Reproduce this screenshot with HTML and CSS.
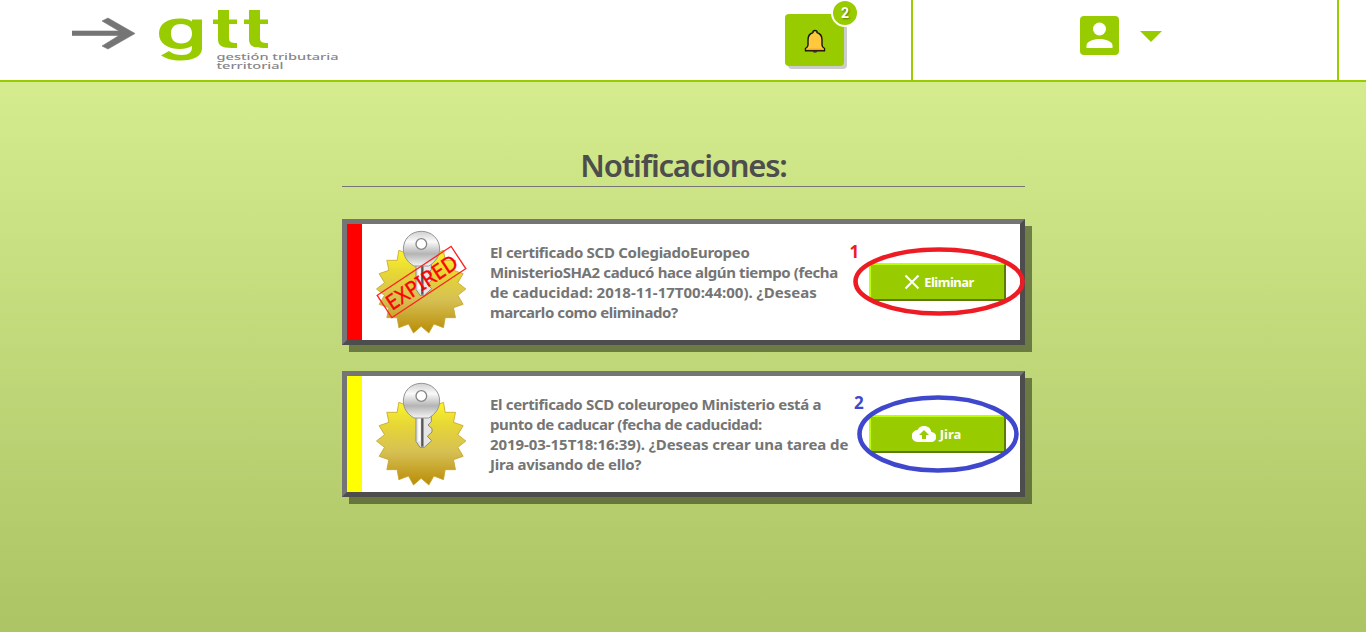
FILE: index.html
```html
<!DOCTYPE html>
<html lang="es">
<head>
<meta charset="utf-8">
<title>Notificaciones</title>
<link rel="stylesheet" href="styles.css">
</head>
<body>
<header class="topbar">
  <div class="brand">
    <svg class="logo" width="280" height="76" viewBox="0 0 280 76" role="img" aria-label="gtt">
      <path class="arrow" d="M0 31h47L30 21l6-3 27 15.500-27 15.500-6-3 17-10.500H0z"/>
      <g class="mark">
        <path fill-rule="evenodd" d="M130 19.500v29c0 8-9 12-21 12-9 0-15-2-20-5l8-4.500c4 3 8 4 13 4 7 0 10-3 10-7.500v-1.500c-4 2-7 3-12 3-13 0-21-6-21-15.500S95 18.500 108 18.500c6 0 9 1 12 3v-2zM109 24c-6 0-10 3-10 9.500s4 10 10 10c7 0 11-4 11-10s-4-9.500-11-9.500z"/>
        <path d="M146 10h11v9.500h8v4.500h-8v14c0 4 2 5 8 5v5h-5c-11 0-14-3-14-9V24h-5v-4.500h5z"/>
        <path d="M177 10h11v9.500h8v4.500h-8v14c0 4 2 5 8 5v5h-5c-11 0-14-3-14-9V24h-5v-4.500h5z"/>
      </g>
      <g class="tagline">
        <text x="144.500" y="60" textLength="122" lengthAdjust="spacingAndGlyphs">gestión tributaria</text>
        <text x="144.500" y="69.300" textLength="67" lengthAdjust="spacingAndGlyphs">territorial</text>
      </g>
    </svg>
    <div class="bell">
      <svg width="22" height="25" viewBox="0 0 22 25">
        <path d="M8.500 22h5q-.5 2-2.500 2t-2.500-2z" fill="#6b4a38"/>
        <path d="M9 3.500V2.300Q11 .6 13 2.300v1.200Q18 5 18 11v5q0 2 2.500 3.500v2.300h-19v-2.300Q4 18 4 16v-5Q4 5 9 3.500z" fill="#ffc83d" stroke="#15150a" stroke-width="1.400"/>
        <path d="M2.400 19.600h17.200v1.500H2.400z" fill="#f5a32c"/>
      </svg>
      <span class="badge">2</span>
    </div>
  </div>
  <div class="account">
    <svg width="39" height="39" viewBox="0 0 39 39">
      <rect width="39" height="39" rx="4" fill="#9c0"/>
      <circle cx="19.500" cy="13" r="6.500" fill="#fff"/>
      <path d="M6.500 32v-2.500c0-4 7-6.500 13-6.500s13 2.500 13 6.500V32z" fill="#fff"/>
    </svg>
    <span class="caret"></span>
  </div>
</header>

<main class="content">
  <h1 class="title"><span class="title-text">Notificaciones:</span></h1>

  <article class="card expired">
    <svg class="seal" width="93" height="105" viewBox="120 60 279 315">
      <defs>
        <linearGradient id="gold" x1="0" y1="0" x2="0" y2="1">
          <stop offset="0" stop-color="#fbf42c"/><stop offset=".28" stop-color="#e6d636"/><stop offset=".6" stop-color="#d6c053"/><stop offset="1" stop-color="#b98c08"/>
        </linearGradient>
        <linearGradient id="steel" x1="0" y1="0" x2="0" y2="1">
          <stop offset="0" stop-color="#d0d0d0"/><stop offset=".3" stop-color="#fafafa"/><stop offset=".65" stop-color="#b4b4b4"/><stop offset="1" stop-color="#f4f4f4"/>
        </linearGradient>
        <g id="certificate">
          <path transform="translate(258.500 237)" fill="url(#gold)" stroke="#c5a52c" stroke-width="2.500" stroke-linejoin="round" d="M134 0 110 19 126 46 97 56 103 86 72 86 67 116 38 105 23 132 0 112-23 132-38 105-67 116-72 86-103 86-97 56-126 46-110 19-134 0-110-19-126-46-97-56-103-86-72-86-67-116-38-105-23-112 0-112 23-112 38-105 67-116 72-86 103-86 97-56 126-46 110-19z"/>
          <path d="M243 160v78l12 18h13l22-20-13-13 14-13v-10l-12-11 10-10v-19z" fill="#e6e6e6" stroke="#8b8b86" stroke-width="3"/>
          <path d="M262 168v86" stroke="#555" stroke-width="7"/>
          <path d="M253 168v70" stroke="#fff" stroke-width="6"/>
          <path fill="url(#steel)" stroke="#969696" stroke-width="3" d="M259 64c31 0 55 23 55 53 0 23-14 40-33 51h-44c-19-11-32-28-32-51 0-30 23-53 54-53z"/>
          <circle cx="259" cy="102" r="16" fill="#fff" stroke="#858585" stroke-width="4"/>
        </g>
      </defs>
      <use href="#certificate"/>
      <g transform="translate(259.500 216) rotate(-33.500)">
        <rect x="-133" y="-40" width="266" height="80" fill="none" stroke="#f22" stroke-width="4"/>
        <text class="stamp" x="-122" y="24" textLength="244" lengthAdjust="spacingAndGlyphs">EXPIRED</text>
      </g>
    </svg>
    <p class="message">
      <span class="line l1">El certificado SCD ColegiadoEuropeo</span>
      <span class="line l2">MinisterioSHA2 caducó hace algún tiempo (fecha</span>
      <span class="line l3">de caducidad: 2018-11-17T00:44:00). ¿Deseas</span>
      <span class="line l4">marcarlo como eliminado?</span>
    </p>
    <button class="action">
      <svg width="16" height="16" viewBox="0 0 16 16"><path d="M1.500 1.500l13 13m0-13l-13 13" stroke="#fff" stroke-width="2.100"/></svg>
      <span>Eliminar</span>
    </button>
    <svg class="note" width="190" height="90" viewBox="845 235 190 90">
      <ellipse cx="939" cy="281.500" rx="83.500" ry="32" fill="none" stroke="#ed1c24" stroke-width="4.600"/>
      <text x="849.500" y="258" fill="#ed1c24">1</text>
    </svg>
  </article>

  <article class="card warning">
    <svg class="seal" width="93" height="105" viewBox="120 60 279 315"><use href="#certificate"/></svg>
    <p class="message">
      <span class="line l5">El certificado SCD coleuropeo Ministerio está a</span>
      <span class="line l6">punto de caducar (fecha de caducidad:</span>
      <span class="line l7">2019-03-15T18:16:39). ¿Deseas crear una tarea de</span>
      <span class="line l8">Jira avisando de ello?</span>
    </p>
    <button class="action jira">
      <svg width="24" height="16" viewBox="0 0 24 16"><path fill="#fff" fill-rule="evenodd" d="M19.400 6A7.500 7.500 0 0 0 5.400 4 6 6 0 0 0 6 16h13a5 5 0 0 0 .4-10zM14 9v4h-4V9H7l5-5 5 5z"/></svg>
      <span>Jira</span>
    </button>
    <svg class="note" width="190" height="90" viewBox="845 387 190 90">
      <ellipse cx="938" cy="434" rx="78.500" ry="36.500" fill="none" stroke="#3f48cc" stroke-width="4.600"/>
      <text x="854" y="409" fill="#3f48cc">2</text>
    </svg>
  </article>
</main>
</body>
</html>
```
FILE: styles.css
```css
* { box-sizing: border-box; }

body {
  margin: 0;
  height: 632px;
  display: flex;
  flex-direction: column;
  overflow: hidden;
  font-family: "Noto Sans", sans-serif;
}

.topbar {
  display: flex;
  height: 82px;
  flex: none;
  background: #fff;
  border-bottom: 2px solid #9c0;
}

.brand {
  display: flex;
  justify-content: space-between;
  width: 913px;
  padding: 0 67px 0 72px;
  border-right: 2px solid #9c0;
}

.arrow { fill: #757575; stroke: #757575; stroke-width: 0.6; }
.mark { fill: #9c0; }
.tagline { fill: #858589; font: 500 9.5px "Noto Sans", sans-serif; }

.bell {
  position: relative;
  display: flex;
  align-items: center;
  justify-content: center;
  width: 59px;
  height: 52px;
  margin-top: 14px;
  padding-top: 3px;
  background: #9c0;
  border-radius: 4px;
  box-shadow: 3px 3px 0 #ccc;
}

.badge {
  position: absolute;
  top: -15px;
  right: -15px;
  width: 28px;
  height: 28px;
  border: 2px solid #fff;
  border-radius: 50%;
  background: #9c0;
  color: #fff;
  font: 700 14px/24px Roboto, sans-serif;
  text-align: center;
  text-shadow: 1px 1px 2px #5a7a00;
}

.account {
  display: flex;
  align-items: flex-start;
  gap: 21px;
  width: 426px;
  padding: 16px 0 0 167px;
  border-right: 2px solid #9c0;
}

.caret {
  margin-top: 15px;
  border: 11px solid transparent;
  border-top-color: #9c0;
  border-bottom: 0;
}

.content {
  flex: 1;
  display: flex;
  flex-direction: column;
  gap: 26px;
  padding: 63px 341px 0 342px;
  background: linear-gradient(#d4ec8d, #acc464);
}

.title {
  height: 42px;
  margin: 0 0 6px;
  border-bottom: 1px solid #757575;
  color: #4d4d4d;
  font: 600 31px/40px "Noto Sans", sans-serif;
  text-align: center;
}

.title-text { letter-spacing: -1.2px; }

.card {
  position: relative;
  display: flex;
  align-items: center;
  height: 126px;
  background: #fff;
  border: 5px solid;
  border-color: #757575 #4d4d4d #4d4d4d #757575;
  box-shadow: 7px 7px 0 rgba(22, 30, 14, 0.5);
}

.card::before {
  content: "";
  align-self: stretch;
  width: 15px;
}

.expired::before { background: red; }
.warning::before { background: #ff0; }

.seal { flex: none; margin: 0 22px 0 13px; overflow: visible; }
.stamp { font: 400 64px "Noto Sans", sans-serif; fill: #f00; stroke: #f00; stroke-width: 1; }

.message {
  width: 379px;
  margin: 0;
  color: #757575;
  font: 700 15px/20px "Noto Sans", sans-serif;
}

.line { display: block; white-space: nowrap; }
.l1 { letter-spacing: -0.29px; }
.l2 { letter-spacing: -0.38px; }
.l3 { letter-spacing: 0; }
.l4 { letter-spacing: -0.43px; }
.l5 { letter-spacing: -0.33px; }
.l6 { letter-spacing: -0.42px; }
.l7 { letter-spacing: -0.06px; }
.l8 { letter-spacing: -0.24px; }

.action {
  display: flex;
  align-items: center;
  justify-content: center;
  gap: 4px;
  flex: none;
  width: 137px;
  height: 38px;
  padding: 0 0 0 3px;
  border: 2px solid;
  border-color: #bfff00 #5a7a00 #5a7a00 #bfff00;
  border-radius: 2px;
  background: #9c0;
  color: #fff;
  font: 700 13px "Noto Sans", sans-serif;
  letter-spacing: -0.5px;
}

.jira { letter-spacing: 0; padding: 0 2px 0 0; }

.note {
  position: absolute;
  left: 498px;
  top: 11px;
  overflow: visible;
}

.note text { font: 700 17px "Open Sans", sans-serif; }
```
